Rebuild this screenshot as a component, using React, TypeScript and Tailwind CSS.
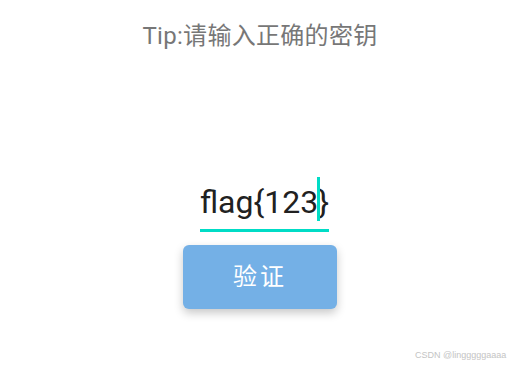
export default function App() {
  return (
    <div
      className="relative w-[509px] h-[366px] overflow-hidden bg-white"
      style={{ fontFamily: 'Roboto, "Noto Sans CJK SC", sans-serif' }}
    >
      <div className="flex flex-col items-center pl-[11px] pt-[24px]">
        {/* Tip */}
        <p className="text-[24px] leading-[24px] tracking-[0.3px] text-[#777777] whitespace-nowrap">
          Tip:请输入正确的密钥
        </p>

        {/* Input */}
        <div className="mt-[138px] ml-[9px] border-b-[3px] border-[#00dcc6] pb-[11px]">
          <span className="block text-[32px] leading-[32px] text-[#212121] whitespace-nowrap">
            flag{"{"}123
            <span className="relative inline-block w-0">
              <span className="absolute left-[-1px] top-[-36px] w-[3px] h-[44px] bg-[#00dcc6]" />
            </span>
            {"}"}
          </span>
        </div>

        {/* Button */}
        <button className="mt-[13px] w-[154px] h-[64px] rounded-[6px] bg-[#74b0e6] text-white text-[24px] tracking-[3px] shadow-[0_4px_10px_rgba(0,0,0,0.22)]">
          验证
        </button>
      </div>

      <span
        className="absolute left-[415px] top-[349px] text-[9px] leading-[12px] text-[#c4c4c4] whitespace-nowrap"
        style={{ fontFamily: '"Liberation Sans", sans-serif' }}
      >
        CSDN @lingggggaaaa
      </span>
    </div>
  );
}
